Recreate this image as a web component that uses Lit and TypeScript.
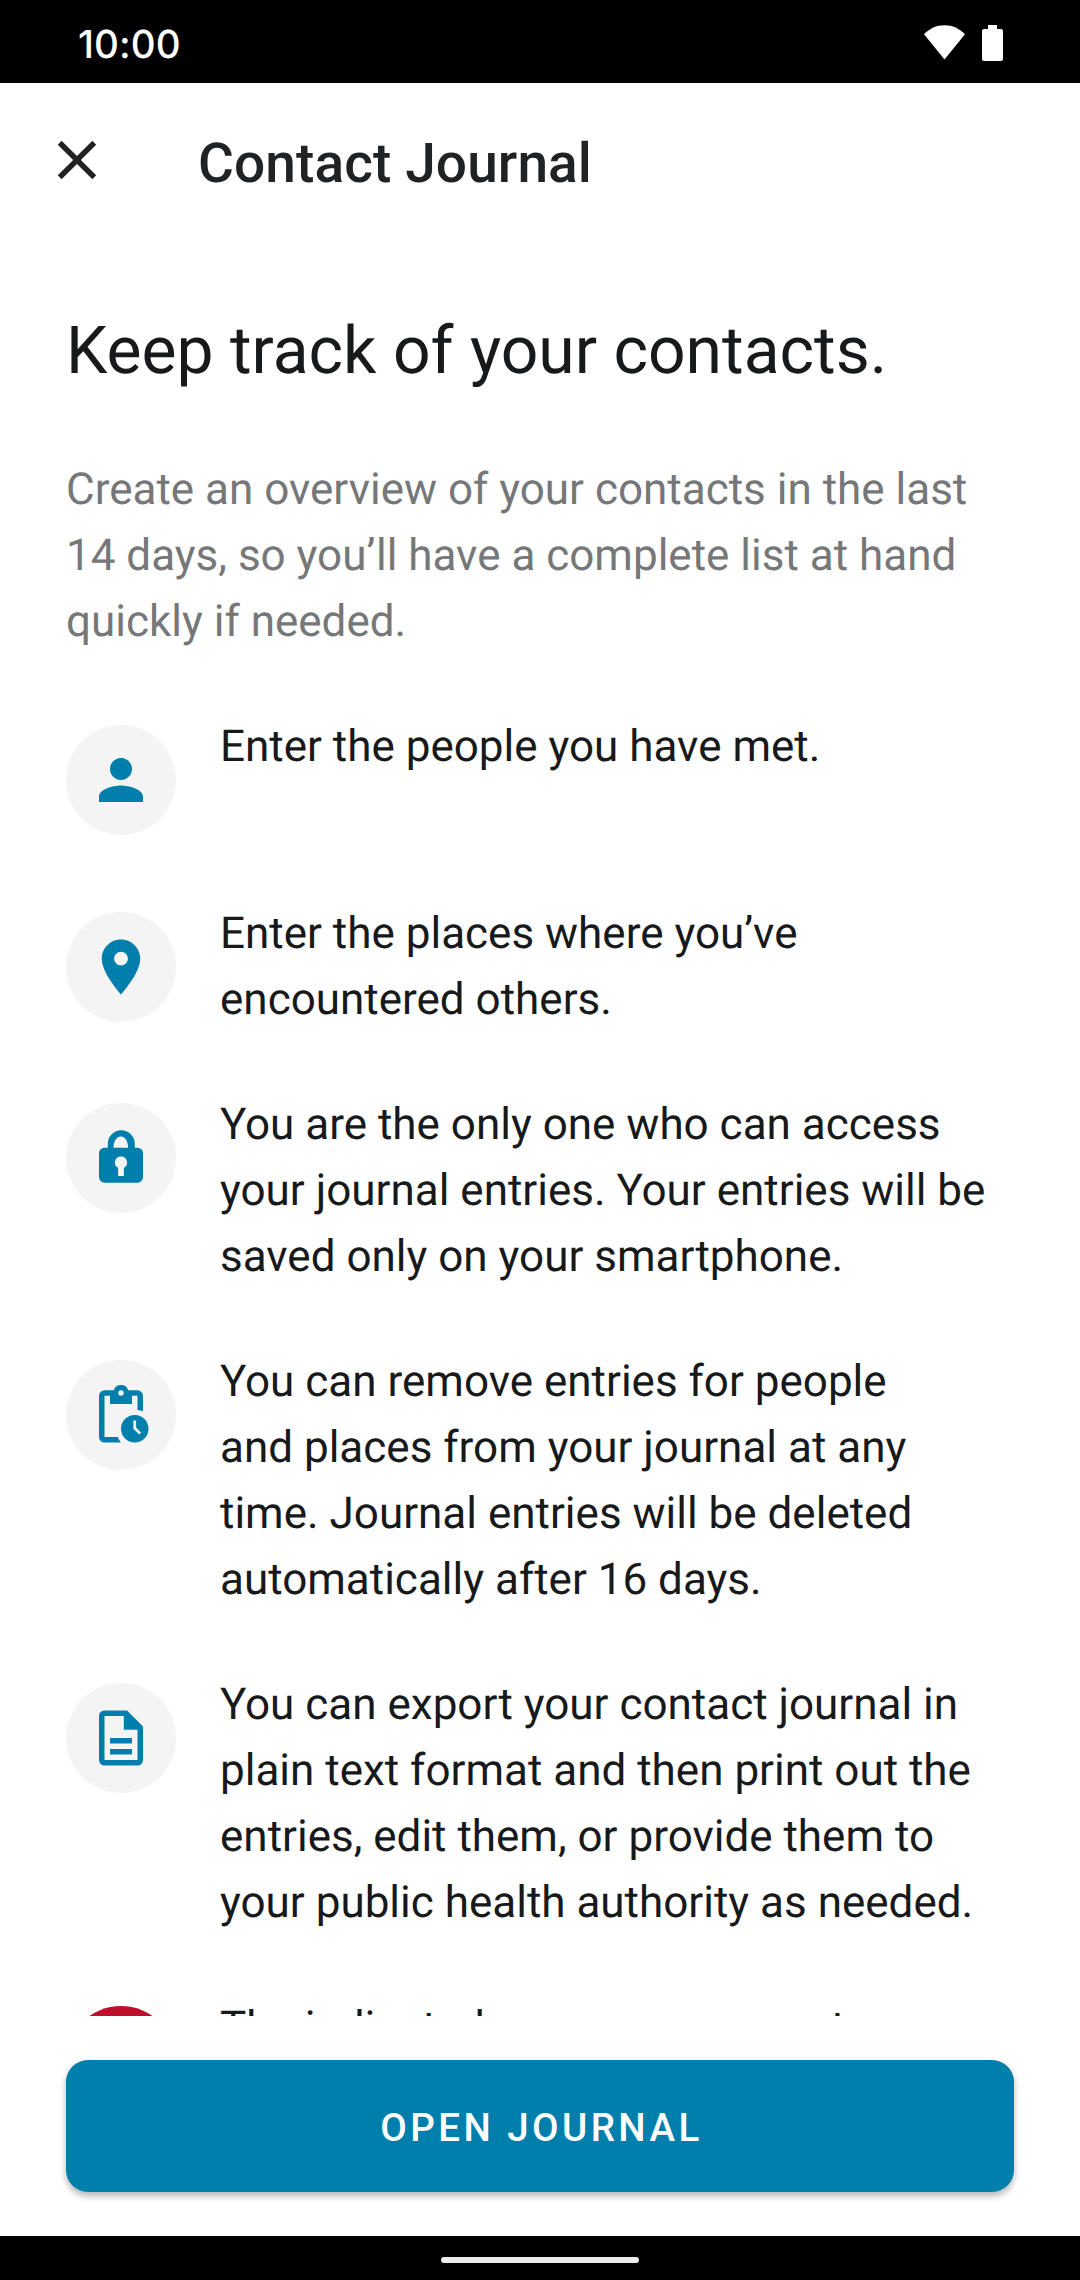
import { LitElement, html, css, svg } from "lit";
import { customElement } from "lit/decorators.js";

const ICONS = {
  person: svg`<path d="M33 33c6.08 0 11-4.92 11-11s-4.92-11-11-11-11 4.92-11 11 4.92 11 11 11zm0 5.5c-7.34 0-22 3.68-22 11V55h44v-5.5c0-7.32-14.66-11-22-11z"/>`,
  place: svg`<path d="M33 5.5c-10.64 0-19.25 8.61-19.25 19.25C13.75 39.19 33 60.5 33 60.5s19.25-21.31 19.25-35.75C52.25 14.11 43.64 5.5 33 5.5zm0 26.1a6.9 6.9 0 1 1 0-13.8 6.9 6.9 0 0 1 0 13.8z"/>`,
  lock: svg`<path fill-rule="evenodd" d="M19.8 22.7v-3.9a13.5 13.5 0 0 1 27 0v3.9h2.7a5.5 5.5 0 0 1 5.5 5.5v24a5.5 5.5 0 0 1-5.5 5.5h-33A5.5 5.5 0 0 1 11 52.200v-24a5.500 5.500 0 0 1 5.500-5.500zM25.500 22.700h14.600c0-5.500-2.200-11.300-7.200-11.300s-7.400 5.800-7.400 11.300zM33 31.500a6 6 0 0 0-2.900 11.300v7.200a1 1 0 0 0 1 1h3.800a1 1 0 0 0 1-1v-7.200A6 6 0 0 0 33 31.500z"/>`,
  clip: svg`<path fill-rule="evenodd" d="M33 60.500H16.500A5.500 5.500 0 0 1 11 55V13.800a5.500 5.500 0 0 1 5.500-5.500h9.200a7.700 7.700 0 0 1 14.600 0h9.200a5.500 5.500 0 0 1 5.500 5.500v15.500a18 18 0 0 0-5.500-1.400V13.800H44V22H22v-8.200h-5.500V55h13.300a18 18 0 0 0 3.200 5.500zM33 13.800a2.750 2.750 0 1 0 0-5.500 2.750 2.750 0 0 0 0 5.500z"/><path fill-rule="evenodd" d="M46.750 33a13.750 13.750 0 1 0 0 27.500 13.750 13.750 0 0 0 0-27.500zm4.500 19.600-5.900-5.900v-8.200h2.750v7.100l5.100 5.100z"/>`,
  doc: svg`<path fill-rule="evenodd" d="M16.500 5.500H39L55 21.500V55a5.500 5.500 0 0 1-5.500 5.500h-33A5.500 5.500 0 0 1 11 55V11a5.500 5.500 0 0 1 5.500-5.500zm0 5.500v44h33V24.800H35.800V11zM22 33h22v5.500H22zM22 44h22v5.500H22z"/>`,
  none: svg``,
};

const ROWS: { icon: keyof typeof ICONS; alert?: boolean; text: string }[] = [
  { icon: "person", text: "Enter the people you have met." },
  { icon: "place", text: "Enter the places where you’ve\nencountered others." },
  { icon: "lock", text: "You are the only one who can access\nyour journal entries. Your entries will be\nsaved only on your smartphone." },
  { icon: "clip", text: "You can remove entries for people\nand places from your journal at any\ntime. Journal entries will be deleted\nautomatically after 16 days." },
  { icon: "doc", text: "You can export your contact journal in\nplain text format and then print out the\nentries, edit them, or provide them to\nyour public health authority as needed." },
  { icon: "none", alert: true, text: "The indicated exposures are not" },
];

@customElement("app-root")
export class AppRoot extends LitElement {
  static styles = css`
    :host { display: block; }
    .screen { width: 1080px; height: 2280px; display: flex; flex-direction: column; background: #fff; overflow: hidden; font-family: Roboto, sans-serif; color: #17191a; text-rendering: geometricPrecision; }
    .status { height: 83px; flex: none; background: #000; color: #fff; display: flex; justify-content: space-between; box-sizing: border-box; padding: 0 77px; }
    .clock { font: 500 38.5px/53px Inter, sans-serif; padding: 19px 0 0 1px; letter-spacing: 0.1px; font-feature-settings: "calt" 0; }
    .signals { display: flex; gap: 17px; padding-top: 25px; }
    .bar { height: 154px; flex: none; display: flex; align-items: center; padding-left: 44px; gap: 88px; }
    .bar h1 { margin: 0; font-size: 55px; line-height: 64px; font-weight: 500; color: #202224; padding-top: 7px; letter-spacing: 0.1px; }
    .close { display: block; width: 66px; height: 66px; }
    .content { flex: none; height: 1779px; overflow: hidden; box-sizing: border-box; padding: 0 66px; }
    h2 { margin: 76px 0 0; font-size: 66px; line-height: 78px; font-weight: 400; }
    .intro { margin: 65px 0 59px; color: #757779; }
    .intro, .text { font-size: 44px; line-height: 66px; white-space: pre; }
    .rows { display: flex; flex-direction: column; gap: 59px; }
    .row { display: flex; gap: 44px; align-items: flex-start; min-height: 128px; }
    .disc { width: 110px; height: 110px; flex: none; margin-top: 12px; border-radius: 50%; background: #f4f4f4; display: flex; align-items: center; justify-content: center; }
    .disc svg { width: 66px; height: 66px; fill: #007fad; }
    .disc.alert { background: #c00f2d; }
    .footer { flex: 1; padding: 44px 66px 0; }
    .action { width: 948px; height: 132px; border: 0; border-radius: 22px; background: #007fad; color: #fff; font: 500 38.5px/46px Roboto, sans-serif; letter-spacing: 3.44px; box-shadow: 0 5px 6px rgba(0,0,0,.2), 0 2px 8px rgba(0,0,0,.1); display: flex; align-items: center; justify-content: center; padding: 3px 0 0 3px; }
    .nav { height: 44px; flex: none; background: #000; display: flex; justify-content: center; align-items: center; }
    .pill { width: 198px; height: 6px; border-radius: 3px; background: #ebebeb; margin-top: 4px; }
  `;

  render() {
    return html`
      <div class="screen">
        <div class="status">
          <span class="clock">10:00</span>
          <div class="signals">
            <svg width="41" height="36" viewBox="0 0 41 36" fill="#fff"><path d="M20.500 34.500 0 9.300C5.500 3.600 12.500 0.300 20.500 0.300S35.500 3.600 41 9.300z"/></svg>
            <svg width="21" height="36" viewBox="0 0 21 36" fill="#fff"><path d="M6 0h9v4h4a2 2 0 0 1 2 2v28a2 2 0 0 1-2 2H2a2 2 0 0 1-2-2V6a2 2 0 0 1 2-2h4z"/></svg>
          </div>
        </div>
        <div class="bar">
          <svg class="close" viewBox="0 0 24 24" fill="#202224"><path d="M19 6.410 17.590 5 12 10.590 6.410 5 5 6.410 10.590 12 5 17.590 6.410 19 12 13.410 17.590 19 19 17.590 13.410 12z"/></svg>
          <h1>Contact Journal</h1>
        </div>
        <div class="content">
          <h2>Keep track of your contacts.</h2>
          <div class="intro">${"Create an overview of your contacts in the last\n14 days, so you’ll have a complete list at hand\nquickly if needed."}</div>
          <div class="rows">
            ${ROWS.map((r) => html`<div class="row">
              <div class="disc ${r.alert ? "alert" : ""}"><svg viewBox="0 0 66 66">${ICONS[r.icon]}</svg></div>
              <div class="text">${r.text}</div>
            </div>`)}
          </div>
        </div>
        <div class="footer"><button class="action">OPEN JOURNAL</button></div>
        <div class="nav"><div class="pill"></div></div>
      </div>`;
  }
}
